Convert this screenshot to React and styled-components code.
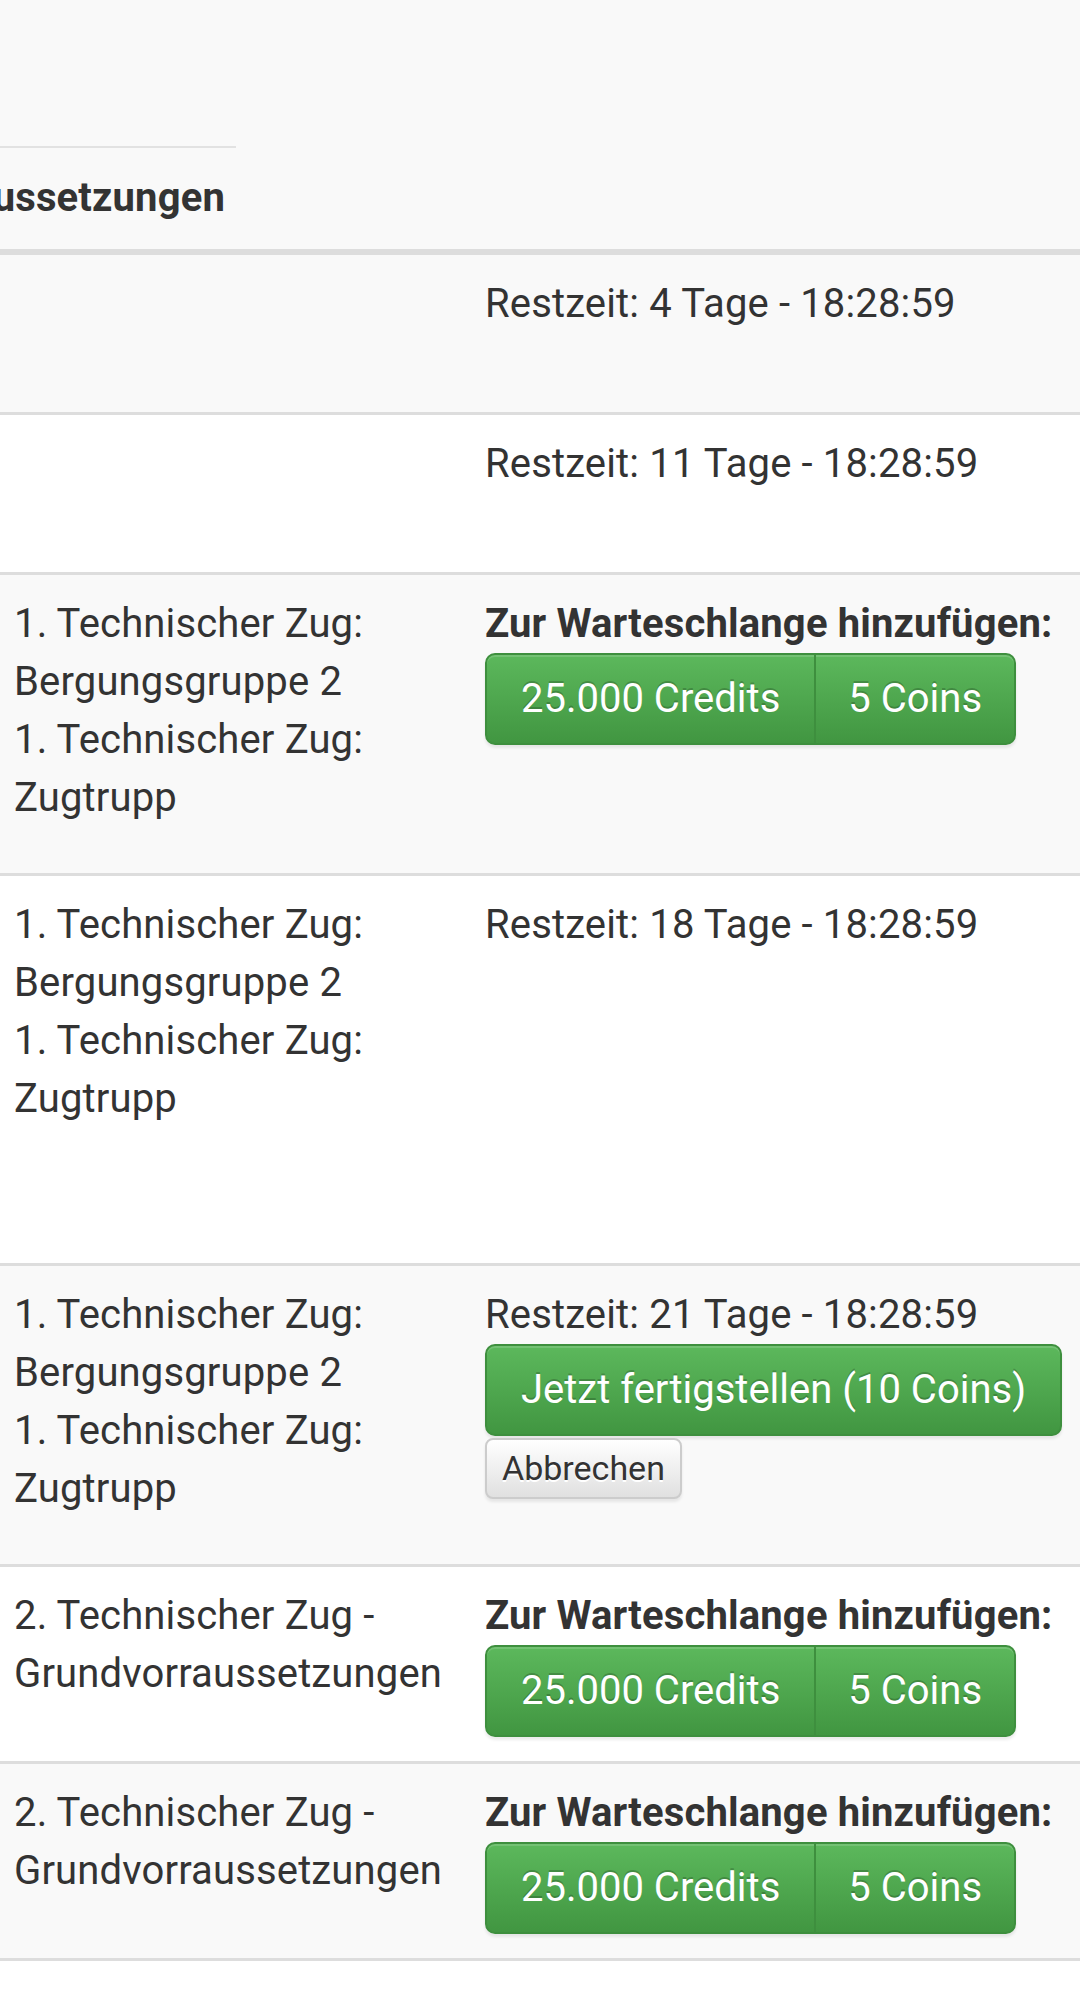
import React from "react";
import styled, { createGlobalStyle } from "styled-components";

const GlobalStyle = createGlobalStyle`
  html, body {
    margin: 0;
    padding: 0;
    background: #ffffff;
  }
  body {
    font-family: Roboto, "Noto Sans", "Liberation Sans", sans-serif;
    font-size: 40px;
    line-height: 58px;
    letter-spacing: 0.15px;
    color: #333333;
  }
  * { box-sizing: border-box; }
`;

const Page = styled.div`
  width: 1080px;
  overflow: hidden;
`;

const Head = styled.div`
  background: #f9f9f9;
  padding-top: 146px;
  border-bottom: 6px solid #dddddd;
`;

const HeadCell = styled.div`
  width: 236px;
  border-top: 2px solid #e2e2e2;
  padding: 21px 11px 22px 0;
  display: flex;
  justify-content: flex-end;
  overflow: hidden;
  white-space: nowrap;
  font-weight: 700;
`;

const Body = styled.div`
  display: flex;
  flex-direction: column;
`;

const Row = styled.div`
  display: grid;
  grid-template-columns: 462px 1fr;
  background: ${(p) => (p.$striped ? "#f9f9f9" : "#ffffff")};
  border-bottom: 3px solid #dddddd;
`;

const LeftCell = styled.div`
  padding: 20px 14px 21px 14px;
`;

const RightCell = styled.div`
  padding: 20px 10px 21px 23px;
  min-height: ${(p) => (p.$minHeight ? `${p.$minHeight + 41}px` : "auto")};
`;

const NameList = styled.ul`
  list-style: none;
  margin: 0 0 25px 0;
  padding: 0;
`;

const Name = styled.li`
  margin: 0;
`;

const QueueTitle = styled.div`
  font-weight: 700;
  white-space: nowrap;
`;

const Time = styled.div`
  white-space: nowrap;
`;

const BtnGroup = styled.div`
  display: inline-flex;
  margin-bottom: 3px;
  border-radius: 10px;
  box-shadow: 0 3px 3px rgba(0, 0, 0, 0.08);
`;

const GreenBtn = styled.button`
  font-family: inherit;
  font-size: 40px;
  line-height: 58px;
  letter-spacing: 0;
  font-weight: 400;
  color: #ffffff;
  text-shadow: 0 -2px 0 rgba(0, 0, 0, 0.2);
  background-image: linear-gradient(to bottom, #5cb85c 0%, #419641 100%);
  border: 2px solid #3e8f3e;
  padding: 15px ${(p) => (p.$pos === "last" ? "32px" : "34px")};
  margin: 0;
  white-space: nowrap;
  cursor: pointer;
  box-shadow: inset 0 2px 0 rgba(255, 255, 255, 0.15);
  border-radius: ${(p) =>
    p.$pos === "first" ? "10px 0 0 10px" : p.$pos === "last" ? "0 10px 10px 0" : "10px"};
  ${(p) => (p.$pos === "last" ? "margin-left: -2px;" : "")}
  ${(p) => (p.$pos === "single" ? "box-shadow: inset 0 2px 0 rgba(255,255,255,0.15), 0 3px 3px rgba(0,0,0,0.08);" : "")}
`;

const DefaultBtn = styled.button`
  font-family: inherit;
  font-size: 34px;
  line-height: 51px;
  letter-spacing: 0;
  color: #333333;
  text-shadow: 0 2px 0 #ffffff;
  background-image: linear-gradient(to bottom, #ffffff 0%, #e0e0e0 100%);
  border: 2px solid #cccccc;
  border-radius: 8px;
  padding: 3px 15px;
  margin: 0;
  cursor: pointer;
  box-shadow: inset 0 2px 0 rgba(255, 255, 255, 0.15), 0 3px 3px rgba(0, 0, 0, 0.08);
`;

const ActionStack = styled.div`
  display: flex;
  flex-direction: column;
  align-items: flex-start;
  gap: 2px;
`;

const techNames = [
  "1. Technischer Zug: Bergungsgruppe 2",
  "1. Technischer Zug: Zugtrupp",
];
const grundNames = ["2. Technischer Zug - Grundvorraussetzungen"];

const rows = [
  { names: null, time: "4 Tage", minHeight: 116 },
  { names: null, time: "11 Tage", minHeight: 116 },
  { names: techNames, queue: true, list: true },
  { names: techNames, time: "18 Tage", minHeight: 346, list: true },
  { names: techNames, time: "21 Tage", finish: true, list: true },
  { names: grundNames, queue: true },
  { names: grundNames, queue: true },
];

function Queue() {
  return (
    <>
      <QueueTitle>Zur Warteschlange hinzufügen:</QueueTitle>
      <BtnGroup>
        <GreenBtn $pos="first">25.000 Credits</GreenBtn>
        <GreenBtn $pos="last">5 Coins</GreenBtn>
      </BtnGroup>
    </>
  );
}

export default function App() {
  return (
    <Page>
      <GlobalStyle />
      <Head>
        <HeadCell>Voraussetzungen</HeadCell>
      </Head>
      <Body>
        {rows.map((r, i) => (
          <Row key={i} $striped={i % 2 === 0}>
            <LeftCell>
              {r.names &&
                (r.list ? (
                  <NameList>
                    {r.names.map((n) => (
                      <Name key={n}>{n}</Name>
                    ))}
                  </NameList>
                ) : (
                  r.names.map((n) => <div key={n}>{n}</div>)
                ))}
            </LeftCell>
            <RightCell $minHeight={r.minHeight}>
              {r.queue && <Queue />}
              {r.time && <Time>Restzeit: {r.time} - 18:28:59</Time>}
              {r.finish && (
                <ActionStack>
                  <GreenBtn $pos="single">Jetzt fertigstellen (10 Coins)</GreenBtn>
                  <DefaultBtn>Abbrechen</DefaultBtn>
                </ActionStack>
              )}
            </RightCell>
          </Row>
        ))}
      </Body>
    </Page>
  );
}
